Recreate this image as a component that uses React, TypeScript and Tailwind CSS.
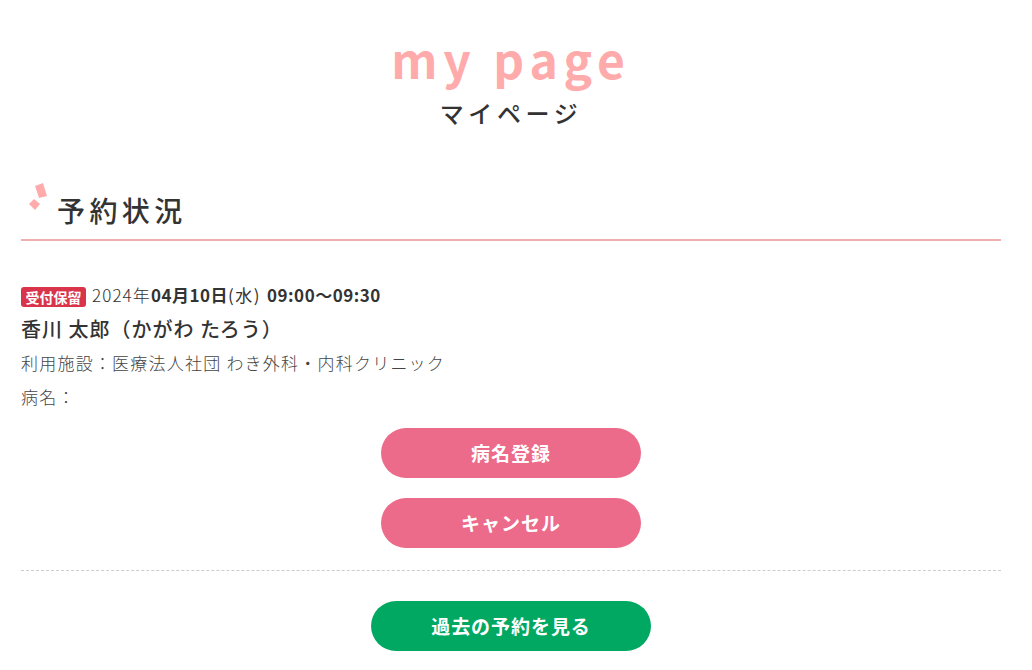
const jp = "font-['Noto_Sans_CJK_JP','Noto_Sans',sans-serif]";
function Btn({ label, cls }: { label: string; cls: string }) {
  return <div className={`flex items-center justify-center h-[50px] rounded-full text-white font-bold text-[19px] tracking-[0.05em] ${cls}`}>{label}</div>;
}
export default function App() {
  return (
    <div className={`w-[1032px] h-[670px] overflow-hidden bg-white text-[#333] ${jp}`}>
      <div className="px-[21px] w-[1022px]">
        <div className="flex flex-col items-center pt-[28px]">
          <div className="text-[48px] leading-[60px] font-bold tracking-[5.8px] text-[#ffabab]">my page</div>
          <div className="text-[24px] leading-[36px] font-medium tracking-[4.6px] mt-[7px]">マイページ</div>
        </div>
        <div className="relative mt-[43px] h-[67px] border-b-2 border-[#eeb0b0] pl-[36px] flex items-center">
          <svg className="absolute left-[6px] top-[6px]" width="30" height="34" viewBox="27 180 30 34">
            <polygon points="35,186 43,183 47,196 39,198" fill="#ffabab" />
            <polygon points="29,204 34,199 40,204 35,210" fill="#ffabab" />
          </svg>
          <div className="text-[28px] font-medium tracking-[4.4px] mt-[7px]">予約状況</div>
        </div>
        <div className="mt-[42px] flex items-center h-[24px]">
          <span className="bg-[#d9344a] text-white text-[14px] font-bold rounded-[3px] px-[4.5px] h-[20px] leading-[20px] mr-[6px] mt-[3px]">受付保留</span>
          <span className="text-[17px] font-light tracking-[1.1px]">2024年</span>
          <span className="text-[17px] font-bold tracking-[0.5px]">04月10日</span>
          <span className="text-[17px] font-normal tracking-[1.5px]">(水)</span>
          <span className="text-[17px] font-bold ml-[6px] tracking-[0.5px]">09:00～09:30</span>
        </div>
        <div className="text-[20px] font-medium leading-[30px] mt-[7px] tracking-[1px]">香川 太郎（かがわ たろう）</div>
        <div className="text-[17px] font-light leading-[24px] mt-[7px] text-[#444] tracking-[1.22px]">利用施設：医療法人社団 わき外科・内科クリニック</div>
        <div className="text-[17px] font-light leading-[24px] mt-[10px] text-[#444] tracking-[1.22px]">病名：</div>
        <div className="flex flex-col items-center gap-[20px] mt-[19px]">
          <Btn label="病名登録" cls="w-[260px] bg-[#ec6a8a]" />
          <Btn label="キャンセル" cls="w-[260px] bg-[#ec6a8a]" />
        </div>
        <div className="border-b border-dashed border-[#ccc] mt-[22px]"></div>
        <div className="flex justify-center mt-[30px]">
          <Btn label="過去の予約を見る" cls="w-[280px] bg-[#00a862]" />
        </div>
      </div>
    </div>
  );
}
